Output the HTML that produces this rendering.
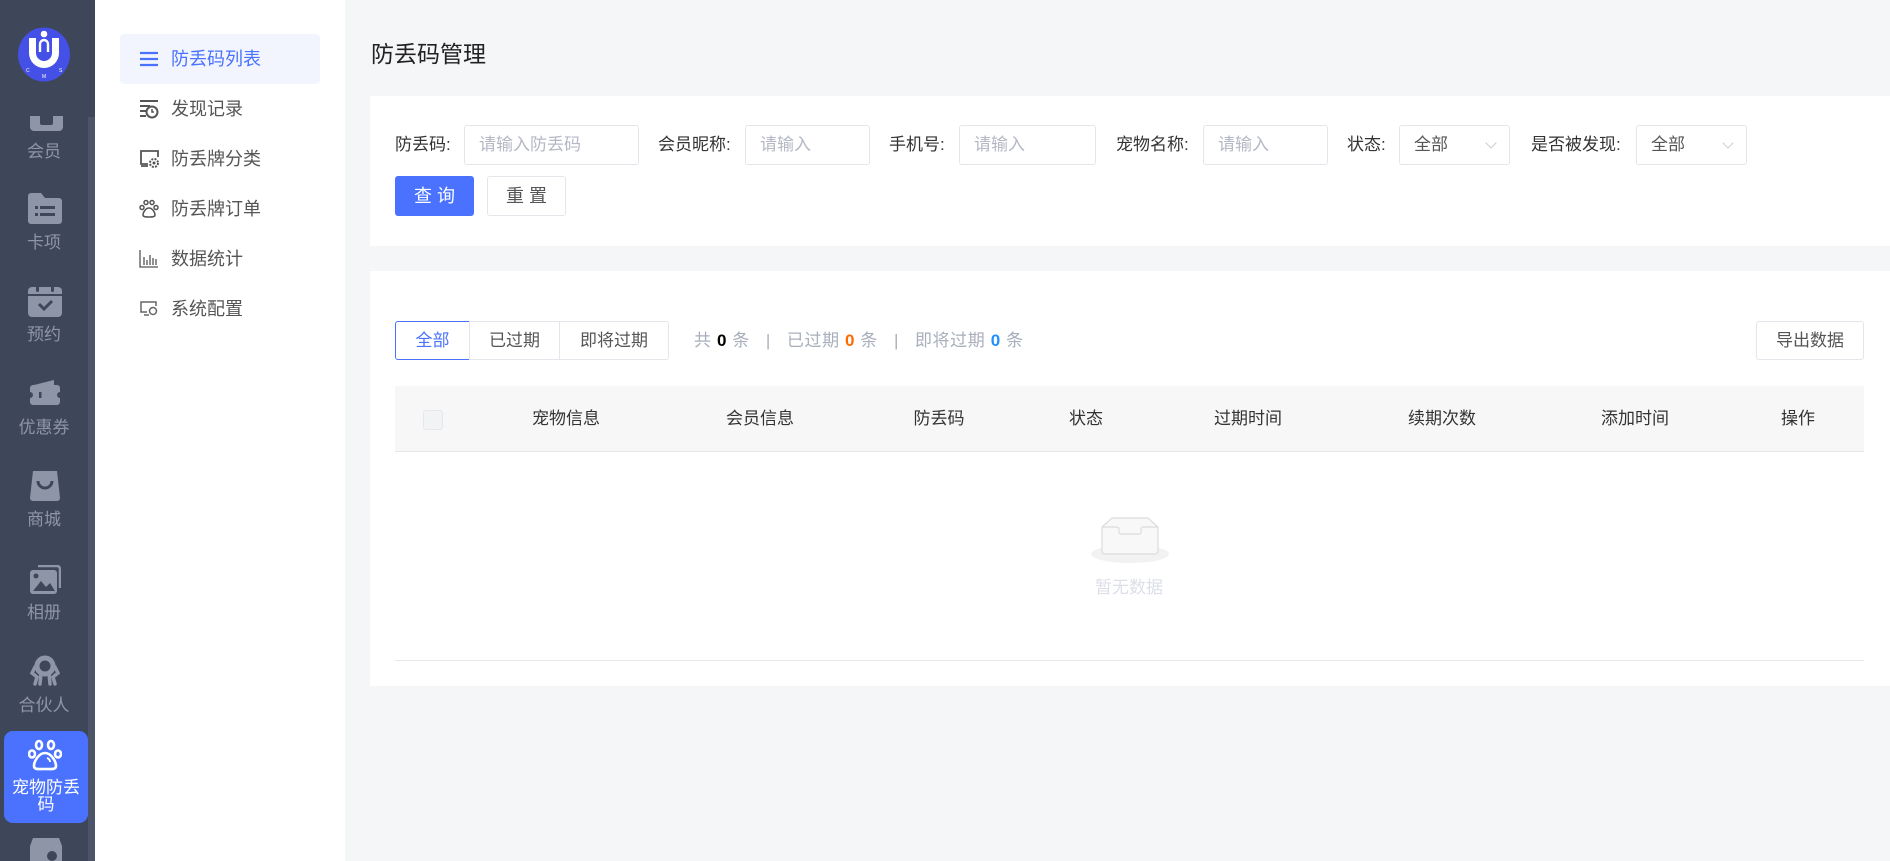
<!DOCTYPE html>
<html><head><meta charset="utf-8"><style>
*{margin:0;padding:0;box-sizing:border-box}
body{width:1890px;height:861px;overflow:hidden;background:#f5f6f8;font-family:"Liberation Sans","Noto Sans CJK SC",sans-serif;position:relative;color:#333}
.a{position:absolute}
#side{left:0;top:0;width:95px;height:861px;background:#3e4759}
.sb{left:88px;top:117px;width:7px;height:744px;background:#4c5568}
.si{position:absolute;left:0;width:88px;text-align:center;color:#8e95a6;font-size:17px;line-height:20px}
#sub{left:95px;top:0;width:250px;height:861px;background:#fff}
.mi{position:absolute;left:25px;width:200px;height:50px;font-size:18px;line-height:50px;color:#555;padding-left:51px}
.mi svg{position:absolute;left:19px;top:15px}
.card{background:#fff;position:absolute}
.lbl{position:absolute;font-size:17px;line-height:40px;top:125px;color:#333}
.inp{position:absolute;top:125px;height:40px;border:1px solid #e4e6ec;border-radius:3px;font-size:17px;line-height:38px;padding-left:14px;color:#b4b8c4;background:#fff}
.sel{color:#555}
.sel:after{content:"";position:absolute;right:14px;top:13px;width:7px;height:7px;border-right:1px solid #ccc;border-bottom:1px solid #ccc;transform:rotate(45deg)}
.btn{position:absolute;height:40px;line-height:38px;text-align:center;font-size:18px;border:1px solid #e4e6ec;border-radius:3px;background:#fff;color:#555}
.th{position:absolute;top:386px;line-height:66px;font-size:17px;color:#333;transform:translateX(-50%)}
</style></head><body>
<div id="side" class="a">
<svg class="a" style="left:17px;top:27px" width="54" height="55" viewBox="0 0 54 55"><ellipse cx="27" cy="27.5" rx="26" ry="27" fill="#4450e6"/><path d="M12 11v15a15 15 0 0 0 30 0V11h-7v15a8 8 0 0 1-16 0V11z" fill="#fff"/><circle cx="27" cy="7" r="3.3" fill="#fff"/><path d="M23 25v-8a4 4 0 0 1 8 0v8" stroke="#fff" stroke-width="2.4" fill="none"/><text x="9" y="45" font-size="5" fill="#fff" font-family="Liberation Sans">C</text><text x="25" y="51" font-size="5" fill="#fff" font-family="Liberation Sans">M</text><text x="42" y="45" font-size="5" fill="#fff" font-family="Liberation Sans">S</text></svg>
<div class="a" style="left:30px;top:116px;width:33px;height:15px;background:#8e95a6;border-radius:0 0 4px 4px"></div>
<div class="a" style="left:40px;top:116px;width:13px;height:9px;background:#3e4759;border-radius:0 0 2px 2px"></div>
<div class="si" style="top:142px">会员</div>
<svg class="a" style="left:28px;top:193px" width="34" height="31" viewBox="0 0 34 31"><path d="M0 3a3 3 0 0 1 3-3h10l4 5h14a3 3 0 0 1 3 3v20a3 3 0 0 1-3 3H3a3 3 0 0 1-3-3z" fill="#8e95a6"/><rect x="7" y="13" width="3" height="3" fill="#3e4759"/><rect x="12" y="13" width="15" height="3" fill="#3e4759"/><rect x="7" y="20" width="3" height="3" fill="#3e4759"/><rect x="12" y="20" width="15" height="3" fill="#3e4759"/></svg>
<div class="si" style="top:233px">卡项</div>
<svg class="a" style="left:28px;top:285px" width="34" height="32" viewBox="0 0 34 32"><rect x="0" y="2" width="34" height="30" rx="4" fill="#8e95a6"/><rect x="0" y="9" width="34" height="2" fill="#3e4759"/><rect x="8" y="0" width="3" height="7" rx="1.5" fill="#3e4759"/><rect x="23" y="0" width="3" height="7" rx="1.5" fill="#3e4759"/><path d="M11 19l5 5 8-8" stroke="#3e4759" stroke-width="3" fill="none"/></svg>
<div class="si" style="top:325px">预约</div>
<svg class="a" style="left:30px;top:378px" width="30" height="30" viewBox="0 0 30 30"><path d="M4 7l20-5v5z" fill="#8e95a6"/><path d="M3 7h24a3 3 0 0 1 3 3v4a3 3 0 0 0 0 6v4a3 3 0 0 1-3 3H3a3 3 0 0 1-3-3v-4a3 3 0 0 0 0-6v-4a3 3 0 0 1 3-3z" fill="#8e95a6"/><rect x="9" y="14" width="2.5" height="6" fill="#3e4759"/></svg>
<div class="si" style="top:418px">优惠券</div>
<svg class="a" style="left:30px;top:471px" width="30" height="30" viewBox="0 0 30 30"><path d="M3 0h24l3 27a3 3 0 0 1-3 3H3a3 3 0 0 1-3-3z" fill="#8e95a6"/><path d="M8 10a7 7 0 0 0 14 0" stroke="#3e4759" stroke-width="3" fill="none"/></svg>
<div class="si" style="top:510px">商城</div>
<svg class="a" style="left:30px;top:565px" width="31" height="29" viewBox="0 0 31 29"><path d="M8 1h19a3 3 0 0 1 3 3v19" stroke="#8e95a6" stroke-width="2.5" fill="none"/><rect x="0" y="5" width="27" height="24" rx="3" fill="#8e95a6"/><circle cx="6" cy="11" r="2.5" fill="#3e4759"/><path d="M3 26l8-10 5 6 4-4 5 8z" fill="#3e4759"/></svg>
<div class="si" style="top:603px">相册</div>
<svg class="a" style="left:30px;top:655px" width="30" height="31" viewBox="0 0 30 31"><circle cx="15" cy="11" r="8" stroke="#8e95a6" stroke-width="5" fill="none"/><path d="M5 12l-3 6 5 4-2 7M25 12l3 6-5 4 2 7M11 18l-1 11M19 18l1 11" stroke="#8e95a6" stroke-width="3.5" fill="none" stroke-linecap="round"/></svg>
<div class="si" style="top:696px">合伙人</div>
<div class="a" style="left:4px;top:731px;width:84px;height:92px;background:#4a72fe;border-radius:9px"></div>
<svg class="a" style="left:28px;top:739px" width="34" height="32" viewBox="0 0 34 32"><g stroke="#fff" stroke-width="2.6" fill="none"><ellipse cx="11" cy="6" rx="3" ry="4"/><ellipse cx="23" cy="6" rx="3" ry="4"/><ellipse cx="4" cy="15" rx="3" ry="3.5"/><ellipse cx="30" cy="15" rx="3" ry="3.5"/><path d="M17 14c-6 0-11 8-11 13 0 4 5 3 11 3s11 1 11-3c0-5-5-13-11-13z"/><path d="M19 19q3 1 3 4" stroke-width="1.8"/></g></svg>
<div class="si" style="top:779px;left:4px;width:84px;color:#fff;line-height:17px">宠物防丢<br>码</div>
<svg class="a" style="left:30px;top:838px" width="32" height="23" viewBox="0 0 32 23"><path d="M3 0h26l3 8v15H0V8z" fill="#8e95a6"/><circle cx="22" cy="18" r="5" fill="#3e4759"/></svg>
<div class="a sb"></div>
</div>

<div id="sub" class="a">
<div class="mi" style="top:34px;background:#f2f5fe;color:#4a72fe;border-radius:4px"><svg width="20" height="20" viewBox="0 0 20 20"><path d="M1 4h18M1 10h18M1 16h18" stroke="#4a72fe" stroke-width="2.2"/></svg>防丢码列表</div>
<div class="mi" style="top:84px"><svg width="20" height="20" viewBox="0 0 20 20"><path d="M1 2h18M1 7h10M1 12h6M1 17h6" stroke="#555" stroke-width="2"/><circle cx="13" cy="13" r="5.5" stroke="#555" stroke-width="2" fill="none"/><path d="M13 10v3h2" stroke="#555" stroke-width="1.5" fill="none"/></svg>发现记录</div>
<div class="mi" style="top:134px"><svg width="22" height="20" viewBox="0 0 22 20"><path d="M9 15H2V2h17v6M2 17h7" stroke="#555" stroke-width="1.8" fill="none"/><circle cx="15" cy="14" r="4" stroke="#555" stroke-width="2" fill="none" stroke-dasharray="2 1.2"/><circle cx="15" cy="14" r="1.5" fill="#555"/></svg>防丢牌分类</div>
<div class="mi" style="top:184px"><svg width="20" height="20" viewBox="0 0 20 20"><g stroke="#555" stroke-width="1.5" fill="none"><circle cx="7" cy="3.5" r="2"/><circle cx="13" cy="3.5" r="2"/><circle cx="3" cy="8.5" r="2"/><circle cx="17" cy="8.5" r="2"/><path d="M10 9c-3 0-6 4-6 7 0 2 3 2 6 2s6 0 6-2c0-3-3-7-6-7z"/></g></svg>防丢牌订单</div>
<div class="mi" style="top:234px"><svg width="20" height="20" viewBox="0 0 20 20"><path d="M1 1v17h18M5 8v8M8 11v5M11 6v10M14 9v7M17 10v6" stroke="#555" stroke-width="1.3" fill="none"/></svg>数据统计</div>
<div class="mi" style="top:284px"><svg width="20" height="20" viewBox="0 0 20 20"><path d="M8 13H2V3h15v4M5 16h5" stroke="#666" stroke-width="1.5" fill="none"/><circle cx="14" cy="12" r="3.5" stroke="#666" stroke-width="1.5" fill="none"/></svg>系统配置</div>
</div>

<div class="a" style="left:371px;top:38px;font-size:23px;color:#222;line-height:32px">防丢码管理</div>

<div class="card" style="left:370px;top:96px;width:1520px;height:150px"></div>
<div class="lbl" style="left:395px">防丢码:</div>
<div class="inp" style="left:464px;width:175px">请输入防丢码</div>
<div class="lbl" style="left:658px">会员昵称:</div>
<div class="inp" style="left:745px;width:125px">请输入</div>
<div class="lbl" style="left:889px">手机号:</div>
<div class="inp" style="left:959px;width:137px">请输入</div>
<div class="lbl" style="left:1116px">宠物名称:</div>
<div class="inp" style="left:1203px;width:125px">请输入</div>
<div class="lbl" style="left:1347px">状态:</div>
<div class="inp sel" style="left:1399px;width:111px">全部</div>
<div class="lbl" style="left:1531px">是否被发现:</div>
<div class="inp sel" style="left:1636px;width:111px">全部</div>
<div class="btn" style="left:395px;top:176px;width:79px;background:#4a72fe;border-color:#4a72fe;color:#fff">查 询</div>
<div class="btn" style="left:487px;top:176px;width:79px">重 置</div>

<div class="card" style="left:370px;top:271px;width:1520px;height:415px"></div>
<div class="btn" style="left:395px;top:321px;width:75px;height:39px;border-color:#4a72fe;color:#4a72fe;font-size:17px;border-radius:3px 0 0 3px">全部</div>
<div class="btn" style="left:469px;top:321px;width:91px;height:39px;font-size:17px;border-radius:0">已过期</div>
<div class="btn" style="left:559px;top:321px;width:110px;height:39px;font-size:17px;border-radius:0 3px 3px 0">即将过期</div>
<div class="a" style="left:694px;top:321px;line-height:39px;font-size:17px;color:#a8aebb;white-space:pre;letter-spacing:0.6px">共 <b style="color:#000">0</b> 条   |   已过期 <b style="color:#ff6a00">0</b> 条   |   即将过期 <b style="color:#1e90ff">0</b> 条</div>
<div class="btn" style="left:1756px;top:321px;width:108px;height:39px;font-size:17px">导出数据</div>

<div class="a" style="left:395px;top:386px;width:1469px;height:66px;background:#f7f7f8;border-bottom:1px solid #e6e7eb"></div>
<div class="a" style="left:423px;top:410px;width:20px;height:20px;border:1px solid #e6e7eb;border-radius:3px;background:#f2f3f5"></div>
<div class="th" style="left:566px">宠物信息</div>
<div class="th" style="left:760px">会员信息</div>
<div class="th" style="left:939px">防丢码</div>
<div class="th" style="left:1086px">状态</div>
<div class="th" style="left:1248px">过期时间</div>
<div class="th" style="left:1442px">续期次数</div>
<div class="th" style="left:1635px">添加时间</div>
<div class="th" style="left:1798px">操作</div>

<svg class="a" style="left:1090px;top:510px" width="80" height="55" viewBox="0 0 80 55"><ellipse cx="40" cy="44" rx="39" ry="9" fill="#f2f2f3"/><path d="M12 17L22 8h36l10 9v24a3 3 0 0 1-3 3H15a3 3 0 0 1-3-3z" fill="#f8f8f9" stroke="#dcdcde" stroke-width="1.2"/><path d="M12 17h15a2 2 0 0 1 2 2v3a2 2 0 0 0 2 2h18a2 2 0 0 0 2-2v-3a2 2 0 0 1 2-2h15" fill="none" stroke="#dcdcde" stroke-width="1.2"/></svg>
<div class="a" style="left:1095px;top:577px;font-size:17px;color:#dcdfe8;line-height:22px">暂无数据</div>
<div class="a" style="left:395px;top:660px;width:1469px;height:1px;background:#e6e7eb"></div>
</body></html>
